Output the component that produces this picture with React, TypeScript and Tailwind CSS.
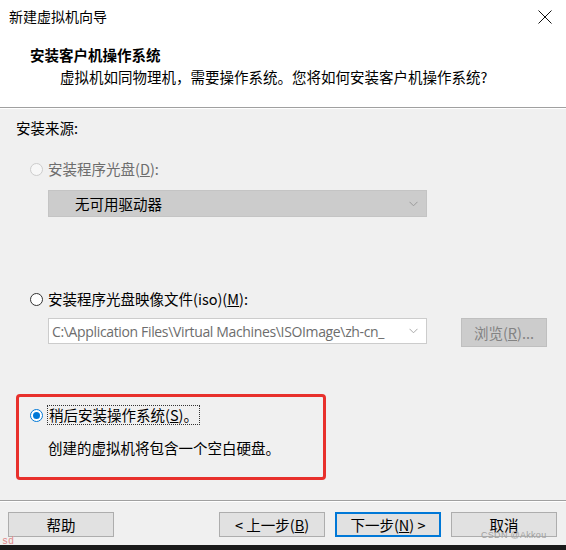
import React from "react";

const font = { fontFamily: '"Noto Sans CJK SC", "Noto Sans", sans-serif' };

function Radio({ state }: { state: "off" | "on" | "disabled" }) {
  if (state === "on") {
    return (
      <span className="flex h-[13px] w-[13px] shrink-0 items-center justify-center rounded-full border border-[#0078d7] bg-white">
        <span className="h-[7px] w-[7px] rounded-full bg-[#0078d7]" />
      </span>
    );
  }
  if (state === "disabled") {
    return <span className="h-[13px] w-[13px] shrink-0 rounded-full border border-[#cccccc] bg-[#f7f7f7]" />;
  }
  return <span className="h-[13px] w-[13px] shrink-0 rounded-full border border-[#333333] bg-white" />;
}

function Chevron({ color }: { color: string }) {
  return (
    <svg width="9" height="6" viewBox="0 0 9 6" fill="none" stroke={color} strokeWidth="1">
      <path d="M0.5 0.8 L4.5 4.8 L8.5 0.8" />
    </svg>
  );
}

function Btn({ children, primary }: { children: React.ReactNode; primary?: boolean }) {
  return (
    <div
      className={`flex h-[25px] w-[106px] items-center justify-center bg-[#e1e1e1] text-[14.5px] text-black ${
        primary ? "border-2 border-[#0078d7]" : "border border-[#adadad]"
      }`}
    >
      {children}
    </div>
  );
}

export default function App() {
  return (
    <div className="relative h-[550px] w-[566px] overflow-hidden bg-[#f0f0f0] text-black" style={font}>
      {/* header */}
      <div className="h-[107px] bg-white">
        <div className="flex h-[33px] items-center justify-between pl-[9px] pr-[14px]">
          <span className="text-[14px]">新建虚拟机向导</span>
          <svg width="14" height="14" viewBox="0 0 14 14" stroke="#111" strokeWidth="1">
            <path d="M0.5 0.5 L13.5 13.5 M13.5 0.5 L0.5 13.5" />
          </svg>
        </div>
        <div className="mt-[12px] pl-[30px] text-[14.5px] font-bold leading-[20px]">安装客户机操作系统</div>
        <div className="mt-[2px] pl-[60px] text-[14.5px] leading-[20px]">
          虚拟机如同物理机，需要操作系统。您将如何安装客户机操作系统?
        </div>
      </div>
      <div className="h-px bg-[#a0a0a0]" />
      <div className="h-px bg-white" />

      {/* body */}
      <div className="h-[391px] pl-[16px] pt-[9px]">
        <div className="flex h-[20px] items-center text-[14.5px]">安装来源:</div>

        <div className="mt-[21px] flex h-[20px] items-center gap-[5px] pl-[14px] text-[14.5px] text-[#6d6d6d]">
          <Radio state="disabled" />
          <span>
            安装程序光盘(<span className="underline">D</span>):
          </span>
        </div>
        <div className="ml-[32px] mt-[11px] flex h-[27px] w-[379px] items-center justify-between border border-[#c4c4c4] bg-[#cccccc] pl-[26px] pr-[8px] text-[14.5px]">
          <span>无可用驱动器</span>
          <Chevron color="#9a9a9a" />
        </div>

        <div className="mt-[72px] flex h-[20px] items-center gap-[5px] pl-[14px] text-[14.5px]">
          <Radio state="off" />
          <span>
            安装程序光盘映像文件(iso)(<span className="underline">M</span>):
          </span>
        </div>
        <div className="ml-[32px] mt-[9px] flex items-start gap-[34px]">
          <div className="flex h-[26px] w-[379px] items-center justify-between border border-[#cccccc] bg-white pl-[3px] pr-[8px]">
            <span
              className="text-[14px] tracking-[-0.35px] text-[#6d6d6d]"
              style={{ fontFamily: '"Open Sans", "Noto Sans", sans-serif' }}
            >
              C:\Application Files\Virtual Machines\ISOImage\zh-cn_
            </span>
            <Chevron color="#a8a8a8" />
          </div>
          <div className="flex h-[29px] w-[86px] items-center justify-center border border-[#bfbfbf] bg-[#cccccc] text-[14.5px] text-[#838383]">
            浏览(<span className="underline">R</span>)...
          </div>
        </div>

        <div className="mt-[47px] h-[86px] w-[310px] rounded-[4px] border-[3px] border-[#e8302c] pl-[11px] pt-[8px]">
          <div className="flex h-[20px] items-center gap-[4px] text-[14.5px]">
            <Radio state="on" />
            <span className="border border-dotted border-[#333] px-px leading-[18px]">
              稍后安装操作系统(<span className="underline">S</span>)。
            </span>
          </div>
          <div className="mt-[13px] flex h-[20px] items-center pl-[18px] text-[14.5px]">
            创建的虚拟机将包含一个空白硬盘。
          </div>
        </div>
      </div>

      {/* footer */}
      <div className="h-px bg-[#a0a0a0]" />
      <div className="h-px bg-white" />
      <div className="flex h-[43px] items-start pl-[8px] pt-[10px]">
        <Btn>帮助</Btn>
        <div className="ml-[105px] flex gap-[10px]">
          <Btn>
            &lt; 上一步(<span className="underline">B</span>)
          </Btn>
          <Btn primary>
            下一步(<span className="underline">N</span>) &gt;
          </Btn>
          <Btn>取消</Btn>
        </div>
      </div>
      <div className="h-[5px] bg-[#1a1a1a]" />

      {/* overlays */}
      <span
        className="absolute left-[2px] top-[538px] text-[10px] leading-[8px] text-[#e08a8a]"
        style={{ fontFamily: '"Liberation Mono", monospace' }}
      >
        sd
      </span>
      <span
        className="absolute left-[481px] top-[531px] text-[9px] leading-[9px] tracking-[0.3px] text-[#a0a0a0]"
        style={{ fontFamily: '"Liberation Sans", sans-serif' }}
      >
        CSDN @Akkou
      </span>
    </div>
  );
}
